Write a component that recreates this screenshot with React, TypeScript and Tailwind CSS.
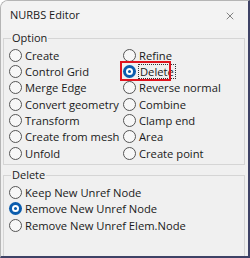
import { X } from 'lucide-react';

const optionLeft = ['Create', 'Control Grid', 'Merge Edge', 'Convert geometry', 'Transform', 'Create from mesh', 'Unfold'];
const optionRight = ['Refine', 'Delete', 'Reverse normal', 'Combine', 'Clamp end', 'Area', 'Create point'];
const deleteOptions = ['Keep New Unref Node', 'Remove New Unref Node', 'Remove New Unref Elem.Node'];

function Radio({ label, checked, focused }: { label: string; checked?: boolean; focused?: boolean }) {
    return (
        <div className="flex h-[16.33px] items-center whitespace-nowrap">
            {checked ? (
                <span className="flex h-[13px] w-[13px] shrink-0 items-center justify-center rounded-full bg-[#0b5cad]">
                    <span className="flex h-[7px] w-[7px] items-center justify-center rounded-full bg-white">
                        <span className="h-[3px] w-[3px] rounded-full bg-[#0b5cad]" />
                    </span>
                </span>
            ) : (
                <span className="h-[13px] w-[13px] shrink-0 rounded-full border border-[#555] bg-[#f7f7f7]" />
            )}
            <span
                className={
                    focused
                        ? 'ml-[2px] border border-dotted border-[#333] px-[1px] leading-[13px]'
                        : 'ml-[3px] leading-[13px]'
                }
            >
                {label}
            </span>
        </div>
    );
}

export default function App() {
    return (
        <div className="h-[258px] w-[250px] bg-white text-[11.2px] text-[#1a1a1a] [font-family:'Open_Sans',sans-serif]">
            <div className="flex h-full w-full flex-col overflow-hidden rounded-tl-[8px] border-l border-t border-[#b5b5b5] border-r-2 border-b-2 border-r-[#3e4266] border-b-[#3e4266] bg-[#f0f0f0]">
                <div className="flex h-[29px] shrink-0 items-center justify-between bg-[#f3f3f3] pl-[9px] pr-[12px]">
                    <span className="text-[11px]">NURBS Editor</span>
                    <X size={12} strokeWidth={1.1} className="text-[#222]" />
                </div>
                <fieldset className="ml-[2px] mr-[3px] border border-[#d5d5d5] px-[5px] pb-[3px] pt-0">
                    <legend className="ml-[2px] px-[1px] text-[11px] leading-[16px]">Option</legend>
                    <div className="grid grid-cols-[114px_1fr] pt-[1px]">
                        <div className="flex flex-col">
                            {optionLeft.map((l) => (
                                <Radio key={l} label={l} />
                            ))}
                        </div>
                        <div className="relative flex flex-col">
                            {optionRight.map((l) => (
                                <Radio key={l} label={l} checked={l === 'Delete'} focused={l === 'Delete'} />
                            ))}
                            <div className="absolute left-[-3px] top-[14px] h-[20px] w-[51px] border-2 border-[#e0141e]" />
                        </div>
                    </div>
                </fieldset>
                <fieldset className="ml-[2px] mr-[3px] mt-[2px] flex-1 border border-b-0 border-[#d5d5d5] px-[5px] pt-0">
                    <legend className="ml-[2px] px-[1px] text-[11px] leading-[16px]">Delete</legend>
                    <div className="flex flex-col pt-[1px]">
                        {deleteOptions.map((l, i) => (
                            <Radio key={l} label={l} checked={i === 1} />
                        ))}
                    </div>
                </fieldset>
            </div>
        </div>
    );
}
